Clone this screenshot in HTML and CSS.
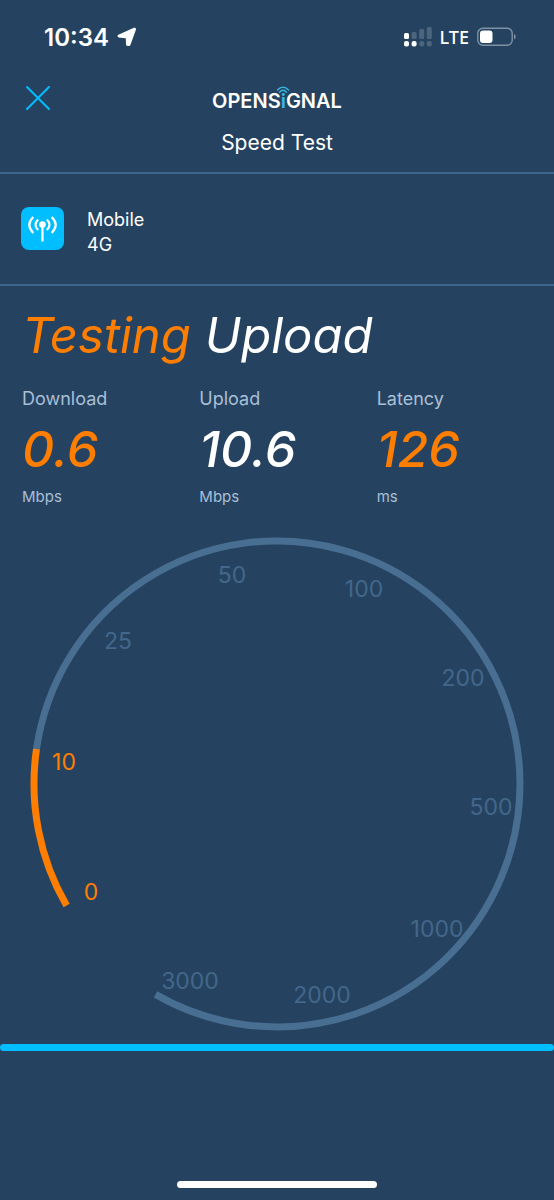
FILE: index.html
```
<!DOCTYPE html>
<html lang="en">
<head>
<meta charset="utf-8">
<meta name="viewport" content="width=device-width, initial-scale=1">
<title>Opensignal Speed Test</title>
<link rel="stylesheet" href="styles.css">
</head>
<body>
<div class="screen">
  <div class="status">
    <div class="status-side">
      <span class="clock">10:34</span>
      <svg class="location" viewBox="0 0 20 20" aria-hidden="true"><path d="M17.500 2.200 2 9 10.300 10 10.500 17.500 12 17.500Z" fill="#fff" stroke="#fff" stroke-width="3" stroke-linejoin="round"/></svg>
    </div>
    <div class="status-side">
      <svg class="signal" viewBox="0 0 28 20" aria-hidden="true">
        <g fill="#fff"><rect y="6" width="5" height="6" rx="1.500"/><rect y="14" width="5" height="5.500" rx="2"/><rect x="7.600" y="14" width="5" height="5.500" rx="2"/></g>
        <g fill="#4c657d"><rect x="7.600" y="5" width="5" height="7" rx="1.500"/><rect x="15.200" y="2" width="5" height="10" rx="1.500"/><rect x="22.800" width="5" height="12" rx="1.500"/><rect x="15.200" y="14" width="5" height="5.500" rx="2"/><rect x="22.800" y="14" width="5" height="5.500" rx="2"/></g>
      </svg>
      <span class="network">LTE</span>
      <svg class="battery" viewBox="0 0 40 20" aria-hidden="true"><rect x=".8" y="1.200" width="34.400" height="17" rx="5" fill="none" stroke="#7f92a4" stroke-width="1.400"/><rect x="3" y="3.500" width="12.500" height="12.500" rx="3" fill="#fff"/><path d="M37 6.800Q40.500 9.700 37 12.600Z" fill="#7f92a4"/></svg>
    </div>
  </div>

  <header class="header">
    <button class="close" type="button" aria-label="Close">
      <svg viewBox="0 0 26 26" aria-hidden="true"><path d="M2 2 24 24M24 2 2 24" stroke="#00beff" stroke-width="2" stroke-linecap="round"/></svg>
    </button>
    <div class="brand">
      <div class="logo">OPENS<span class="logo-i">i<svg class="logo-waves" viewBox="0 0 14 8" aria-hidden="true"><path d="M1.500 4Q7-1.800 12.500 4M3.500 6.200Q7 2.400 10.500 6.200" fill="none" stroke="#37b9e6" stroke-width="1.400" stroke-linecap="round"/></svg></span>GNAL</div>
      <h1 class="title">Speed Test</h1>
    </div>
  </header>

  <section class="connection">
    <svg class="antenna" viewBox="0 0 43 43" aria-hidden="true">
      <rect width="43" height="43" rx="8" fill="#00beff"/>
      <circle cx="21.500" cy="17.500" r="3.300" fill="#fff"/>
      <path d="M21.500 18V34.500M17.200 12.500Q11.800 17.500 17.200 23M25.800 12.500Q31.200 17.500 25.800 23M12.300 10Q4.400 17.700 12.300 26M30.700 10Q38.600 17.700 30.700 26" fill="none" stroke="#fff" stroke-width="2.200"/>
    </svg>
    <div class="connection-text"><div>Mobile</div><div>4G</div></div>
  </section>

  <main class="test">
    <h2 class="phase"><span class="accent">Testing</span> Upload</h2>
    <dl class="results">
      <div><dt>Download</dt><dd class="value accent">0.6</dd><dd class="unit">Mbps</dd></div>
      <div><dt>Upload</dt><dd class="value">10.6</dd><dd class="unit">Mbps</dd></div>
      <div><dt>Latency</dt><dd class="value accent">126</dd><dd class="unit">ms</dd></div>
    </dl>
    <svg class="gauge" viewBox="0 0 554 508" role="img" aria-label="Upload speed gauge, 10 Mbps">
      <path class="track" d="M36.500 213A243 243 0 1 1 155.500 458.400"/>
      <path class="reading" d="M66.600 369.500A243 243 0 0 1 36.500 213"/>
      <g class="scale">
        <text class="reached" x="91" y="364">0</text>
        <text class="reached" x="64" y="234">10</text>
        <text x="118" y="113">25</text>
        <text x="232" y="47">50</text>
        <text x="364" y="61">100</text>
        <text x="463" y="150">200</text>
        <text x="491" y="279">500</text>
        <text x="437" y="401">1000</text>
        <text x="322" y="467">2000</text>
        <text x="190" y="453">3000</text>
      </g>
    </svg>
    <div class="progress"></div>
  </main>
  <footer class="home"><div class="home-bar"></div></footer>
</div>
</body>
</html>
```
FILE: styles.css
```
* { box-sizing: border-box; }
body {
  margin: 0;
  background: #254360;
  color: #fff;
  font-family: Inter, "Liberation Sans", sans-serif;
}
h1, h2, dl, dd { margin: 0; font-weight: 400; }
svg { display: block; }

.screen { min-height: 100vh; display: flex; flex-direction: column; }

.status {
  height: 74px;
  padding: 0 37px 0 44px;
  display: flex;
  align-items: center;
  justify-content: space-between;
}
.status-side { display: flex; align-items: center; gap: 8px; }
.clock { font-size: 24px; font-weight: 600; }
.location { width: 20px; height: 20px; }
.signal { width: 28px; height: 20px; }
.network { font-family: "Noto Sans", sans-serif; font-size: 18px; font-weight: 500; }
.battery { width: 40px; height: 20px; }

.header {
  display: grid;
  grid-template-columns: 76px 1fr 76px;
  height: 100px;
  border-bottom: 2px solid #40658a;
}
.close {
  align-self: start;
  justify-self: start;
  margin: 11px 0 0 25px;
  padding: 0;
  border: 0;
  background: none;
  cursor: pointer;
}
.close svg { width: 26px; height: 26px; }
.brand { text-align: center; padding-top: 15px; }
.logo { font-size: 20px; line-height: 24px; font-weight: 600; }
.logo-i { position: relative; color: #37b9e6; }
.logo-waves {
  position: absolute;
  left: 50%;
  top: -3px;
  width: 14px;
  height: 8px;
  transform: translateX(-50%);
}
.title { margin-top: 17px; font-size: 21px; line-height: 26px; }

.connection {
  display: flex;
  gap: 23px;
  height: 112px;
  padding: 33px 21px 0;
  border-bottom: 2px solid #40658a;
}
.antenna { width: 43px; height: 43px; }
.connection-text { font-size: 18px; line-height: 25px; }

.phase {
  padding: 22px 22px 0;
  font-size: 49px;
  line-height: 56px;
  font-style: italic;
}
.accent { color: #ff7e00; }
.results {
  display: grid;
  grid-template-columns: repeat(3, 1fr);
  padding: 23px 0 0 22px;
  color: #a9bfd6;
}
.results dt { font-size: 18px; line-height: 24px; }
.results .unit { font-size: 15px; line-height: 20px; }
.value {
  color: #fff;
  font-size: 50px;
  line-height: 60px;
  font-style: italic;
  font-weight: 500;
  margin: 8px 0;
}
.value.accent { color: #ff7e00; }

.gauge { width: 100%; margin-top: 29px; }
.track, .reading { fill: none; stroke-width: 7; }
.track { stroke: #486e92; }
.reading { stroke: #ff7e00; }
.scale { font-size: 23px; text-anchor: middle; fill: #43678a; }
.reached { fill: #ff7e00; }
.progress { height: 7px; border-radius: 4px; background: #00beff; }

.home { margin-top: auto; padding-bottom: 12px; display: flex; justify-content: center; }
.home-bar { width: 36%; height: 7px; border-radius: 4px; background: #fff; }
```
